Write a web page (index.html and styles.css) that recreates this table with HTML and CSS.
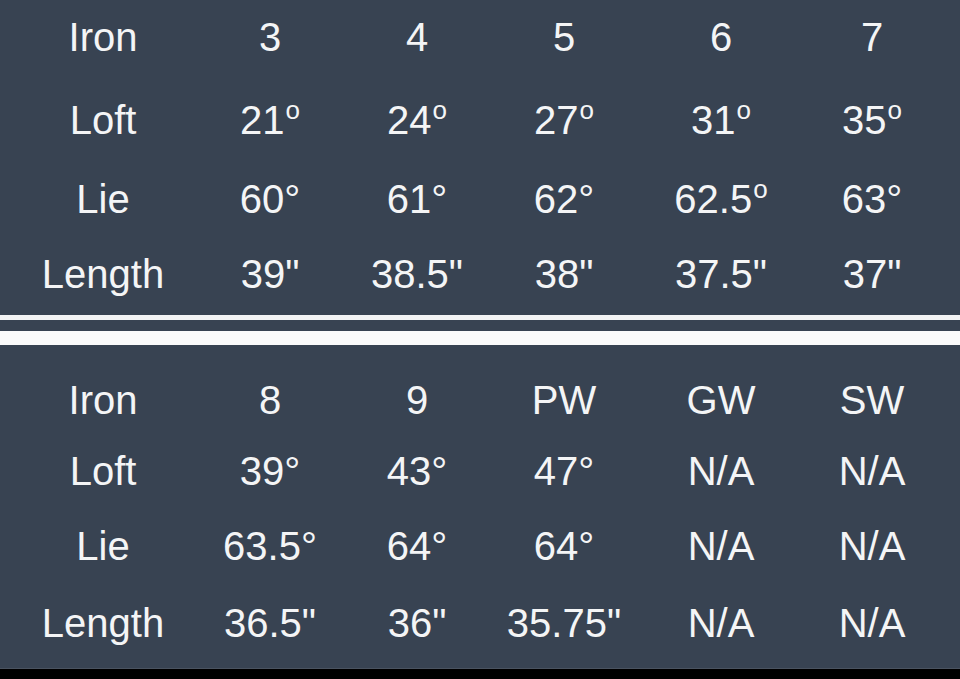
FILE: index.html
```html
<!DOCTYPE html>
<html>
<head>
<meta charset="utf-8">
<link rel="stylesheet" href="styles.css">
</head>
<body>
<div class="page">
  <div class="specs specs-top">
    <div class="cell">Iron</div><div class="cell">3</div><div class="cell">4</div><div class="cell">5</div><div class="cell">6</div><div class="cell">7</div>
    <div class="cell">Loft</div><div class="cell">21<span class="ord">o</span></div><div class="cell">24<span class="ord">o</span></div><div class="cell">27<span class="ord">o</span></div><div class="cell">31<span class="ord">o</span></div><div class="cell">35<span class="ord">o</span></div>
    <div class="cell">Lie</div><div class="cell">60°</div><div class="cell">61°</div><div class="cell">62°</div><div class="cell">62.5<span class="ord">o</span></div><div class="cell">63°</div>
    <div class="cell">Length</div><div class="cell">39"</div><div class="cell">38.5"</div><div class="cell">38"</div><div class="cell">37.5"</div><div class="cell">37"</div>
  </div>
  <div class="divider">
    <div class="rule-thin"></div>
    <div class="rule-thick"></div>
  </div>
  <div class="specs specs-bottom">
    <div class="cell">Iron</div><div class="cell">8</div><div class="cell">9</div><div class="cell">PW</div><div class="cell">GW</div><div class="cell">SW</div>
    <div class="cell">Loft</div><div class="cell">39°</div><div class="cell">43°</div><div class="cell">47°</div><div class="cell">N/A</div><div class="cell">N/A</div>
    <div class="cell">Lie</div><div class="cell">63.5°</div><div class="cell">64°</div><div class="cell">64°</div><div class="cell">N/A</div><div class="cell">N/A</div>
    <div class="cell">Length</div><div class="cell">36.5"</div><div class="cell">36"</div><div class="cell">35.75"</div><div class="cell">N/A</div><div class="cell">N/A</div>
  </div>
  <div class="footer-strip"></div>
</div>
</body>
</html>
```
FILE: styles.css
```css
html, body {
  margin: 0;
  padding: 0;
  background: #000;
}
.page {
  width: 960px;
  height: 679px;
  background: #384352;
  display: flex;
  flex-direction: column;
  font-family: "Liberation Sans", Arial, sans-serif;
  color: #f4f5f6;
  overflow: hidden;
}
.specs {
  display: grid;
  grid-template-columns: 206px 128px 166px 128px 186px 116px;
  font-size: 40px;
}
.specs-top {
  height: 315px;
  grid-template-rows: 74px 91px 67px 83px;
}
.specs-bottom {
  height: 323px;
  padding-top: 20px;
  box-sizing: border-box;
  grid-template-rows: 69px 73px 78px 76px;
}
.cell {
  display: flex;
  align-items: center;
  justify-content: center;
  white-space: nowrap;
  line-height: 1;
}
.ord {
  font-size: 26px;
  position: relative;
  top: -10px;
  margin-left: 1px;
}
.divider {
  display: flex;
  flex-direction: column;
  gap: 11px;
}
.rule-thin {
  height: 5px;
  background: #f2f3f4;
}
.rule-thick {
  height: 14px;
  background: #fbfbfb;
}
.footer-strip {
  flex: 1;
  background: #000;
  border-top: 1px solid #4a5360;
}
```
